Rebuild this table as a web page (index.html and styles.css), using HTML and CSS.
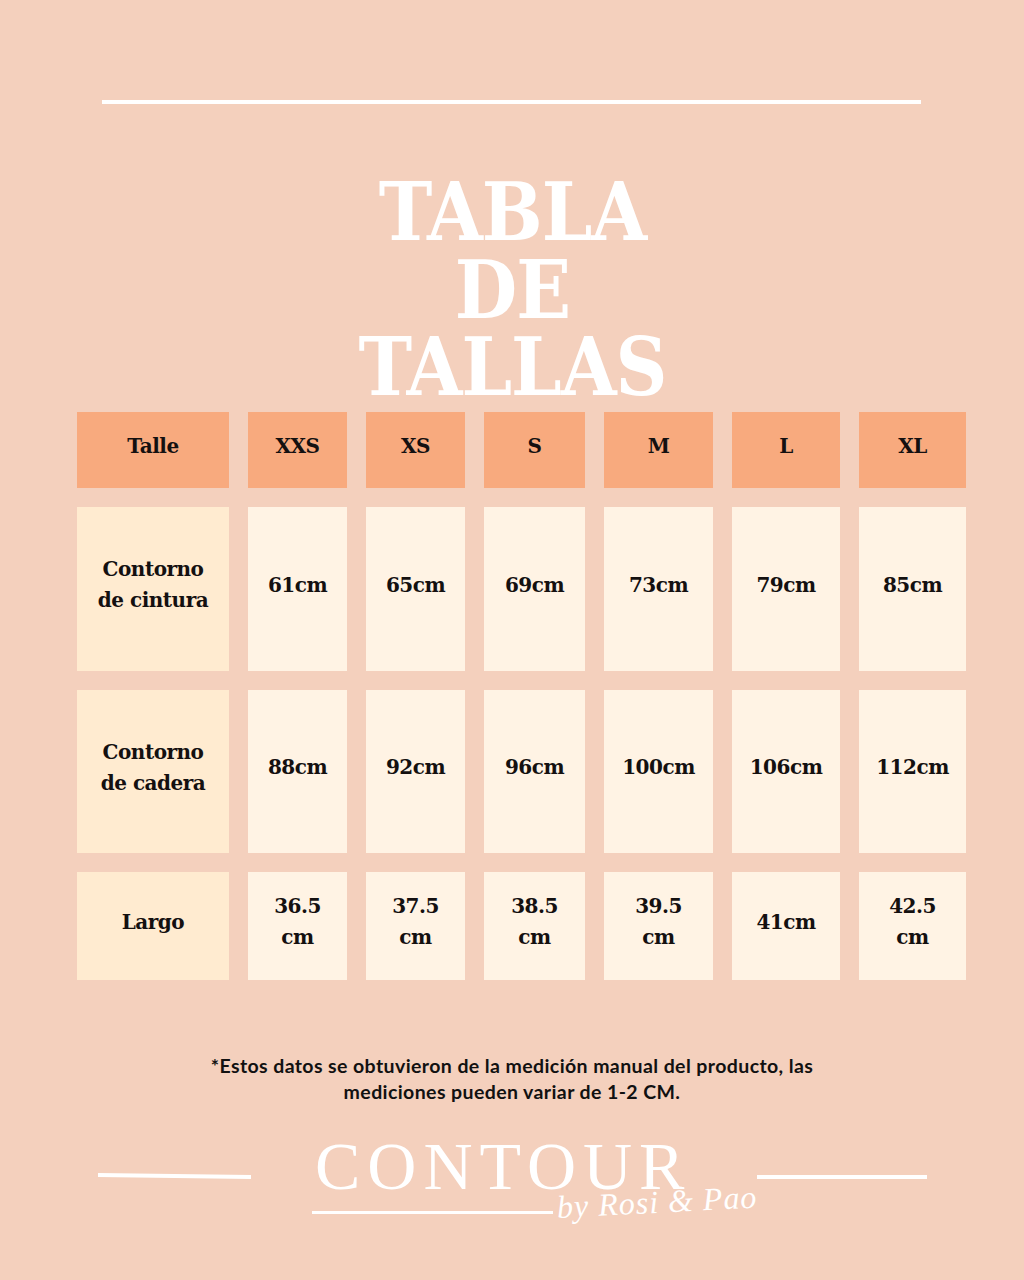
FILE: index.html
```html
<!DOCTYPE html>
<html lang="es">
<head>
<meta charset="utf-8">
<title>Tabla de tallas</title>
<link rel="stylesheet" href="styles.css">
</head>
<body>
<div class="page">
  <div class="topline"></div>
  <h1 class="title">TABLA<br>DE<br>TALLAS</h1>
  <div class="grid">
    <div class="cell head">Talle</div>
    <div class="cell head">XXS</div>
    <div class="cell head">XS</div>
    <div class="cell head">S</div>
    <div class="cell head">M</div>
    <div class="cell head">L</div>
    <div class="cell head">XL</div>

    <div class="cell label">Contorno<br>de cintura</div>
    <div class="cell val">61cm</div>
    <div class="cell val">65cm</div>
    <div class="cell val">69cm</div>
    <div class="cell val">73cm</div>
    <div class="cell val">79cm</div>
    <div class="cell val">85cm</div>

    <div class="cell label">Contorno<br>de cadera</div>
    <div class="cell val">88cm</div>
    <div class="cell val">92cm</div>
    <div class="cell val">96cm</div>
    <div class="cell val">100cm</div>
    <div class="cell val">106cm</div>
    <div class="cell val">112cm</div>

    <div class="cell label">Largo</div>
    <div class="cell val">36.5<br>cm</div>
    <div class="cell val">37.5<br>cm</div>
    <div class="cell val">38.5<br>cm</div>
    <div class="cell val">39.5<br>cm</div>
    <div class="cell val">41cm</div>
    <div class="cell val">42.5<br>cm</div>
  </div>
  <p class="note">*Estos datos se obtuvieron de la medición manual del producto, las<br>mediciones pueden variar de 1-2 CM.</p>
  <div class="footer">
    <div class="sideline left"></div>
    <div class="logo">
      <div class="brand">CONTOUR</div>
      <div class="brandline"></div>
      <div class="script">by Rosi &amp; Pao</div>
    </div>
    <div class="sideline right"></div>
  </div>
</div>
</body>
</html>
```
FILE: styles.css
```css
html, body {
  margin: 0;
  padding: 0;
}
body {
  background: #f4d0bd;
}
.page {
  width: 1024px;
  height: 1280px;
  background: #f4d0bd;
  padding-top: 100px;
  box-sizing: border-box;
  overflow: hidden;
}
.topline {
  margin-left: 102px;
  width: 819px;
  height: 4px;
  background: #ffffff;
}
.title {
  margin: 70px 0 0 0;
  padding-left: 1px;
  text-align: center;
  color: #ffffff;
  font-family: "DejaVu Serif", "Liberation Serif", serif;
  font-stretch: condensed;
  font-weight: 700;
  font-size: 80px;
  line-height: 77.5px;
  letter-spacing: -1px;
}
.grid {
  margin: 5.5px 0 0 77px;
  display: grid;
  grid-template-columns: 152px 99px 99px 101px 109px 108px 107px;
  grid-template-rows: 76px 164px 163px 108px;
  gap: 19px;
}
.cell {
  display: flex;
  align-items: center;
  justify-content: center;
  text-align: center;
  padding-bottom: 8px;
  box-sizing: border-box;
  font-family: "DejaVu Serif", "Liberation Serif", serif;
  font-weight: 700;
  font-size: 20px;
  line-height: 31px;
  letter-spacing: -0.5px;
  color: #141010;
}
.head {
  background: #f8aa7e;
}
.label {
  background: #ffebd0;
}
.val {
  background: #fff3e4;
}
.note {
  margin: 73px 0 0 0;
  text-align: center;
  font-family: Lato, "Open Sans", sans-serif;
  font-weight: 700;
  font-size: 19.5px;
  line-height: 26px;
  letter-spacing: 0.4px;
  color: #111111;
}
.footer {
  margin-top: 27px;
  display: flex;
  align-items: flex-start;
}
.sideline {
  height: 4px;
  background: #ffffff;
}
.sideline.left {
  margin-left: 98px;
  margin-top: 42px;
  width: 153px;
  transform: rotate(0.8deg);
}
.sideline.right {
  margin-top: 43px;
  width: 170px;
}
.logo {
  position: relative;
  margin-left: 61px;
  width: 445px;
  height: 110px;
}
.brand {
  padding-left: 3px;
  font-family: "Liberation Serif", "DejaVu Serif", serif;
  font-weight: 400;
  font-size: 68px;
  line-height: 68px;
  letter-spacing: 7px;
  color: #ffffff;
}
.brandline {
  margin-top: 11px;
  width: 241px;
  height: 3px;
  background: #ffffff;
}
.script {
  position: absolute;
  left: 246px;
  top: 57px;
  font-family: "Liberation Serif", "DejaVu Serif", serif;
  font-style: italic;
  font-size: 32px;
  line-height: 37px;
  letter-spacing: 1px;
  color: #ffffff;
  white-space: nowrap;
  transform: rotate(-3deg);
  transform-origin: left bottom;
}
```
